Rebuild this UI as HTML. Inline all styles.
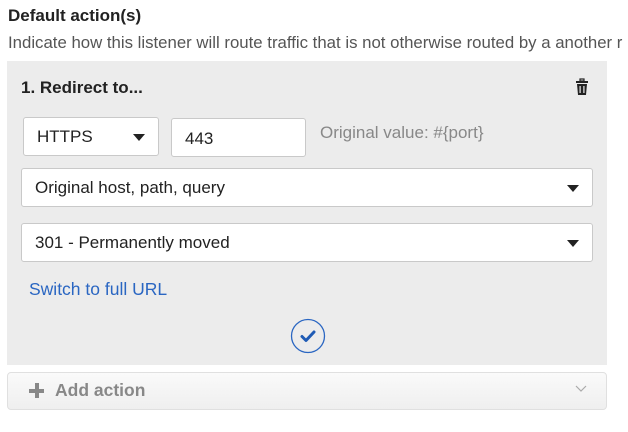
<!DOCTYPE html>
<html><head><style>
body{margin:0;width:628px;height:432px;background:#fff;font-family:"Liberation Sans",Arial,sans-serif;position:relative;overflow:hidden;color:#222}
.a{position:absolute;white-space:nowrap}
.box{position:absolute;background:#fff;border:1px solid #c9c9c9;border-radius:3px;box-sizing:border-box;font-size:17px;color:#222;padding-left:13px;display:flex;align-items:center}
.car{position:absolute;right:13px;top:50%;margin-top:-3px;width:0;height:0;border-left:6px solid transparent;border-right:6px solid transparent;border-top:7px solid #222}
</style></head><body>
<div class="a" style="left:8px;top:6px;font-weight:bold;font-size:17px;color:#222">Default action(s)</div>
<div class="a" style="left:8px;top:33px;font-size:16.8px;color:#555">Indicate how this listener will route traffic that is not otherwise routed by a another r</div>
<div class="a" style="left:7px;top:61px;width:600px;height:304px;background:#ececec"></div>
<div class="a" style="left:21px;top:78px;font-weight:bold;font-size:17px">1. Redirect to...</div>
<svg class="a" style="left:573px;top:78px" width="18" height="18" viewBox="0 0 18 18"><rect x="3" y="3" width="12" height="2" fill="#222"/><rect x="7" y="1" width="4" height="2" fill="none" stroke="#222" stroke-width="1.2"/><path d="M4 6h10l-1 11H5z" fill="#222"/><rect x="6.5" y="8" width="1.2" height="7" fill="#ececec"/><rect x="10.3" y="8" width="1.2" height="7" fill="#ececec"/></svg>
<div class="box" style="left:23px;top:117px;width:136px;height:39px">HTTPS<div class="car"></div></div>
<div class="box" style="left:171px;top:118px;width:135px;height:39px;padding-top:3px">443</div>
<div class="a" style="left:320px;top:123px;font-size:17px;color:#888">Original value: #{port}</div>
<div class="box" style="left:21px;top:168px;width:572px;height:39px">Original host, path, query<div class="car"></div></div>
<div class="box" style="left:21px;top:223px;width:572px;height:39px">301 - Permanently moved<div class="car"></div></div>
<div class="a" style="left:29px;top:279px;font-size:17.5px;color:#2a66c2">Switch to full URL</div>
<svg class="a" style="left:290px;top:318px" width="36" height="36" viewBox="0 0 36 36"><circle cx="18" cy="18" r="16.5" fill="none" stroke="#2a66c2" stroke-width="1.3"/><path d="M12 18.5l4 4 8-8.5" fill="none" stroke="#1f5bb5" stroke-width="3" stroke-linecap="round" stroke-linejoin="round"/></svg>
<div class="a" style="left:7px;top:372px;width:600px;height:38px;box-sizing:border-box;border:1px solid #e0e0e0;border-radius:4px;background:linear-gradient(#fafafa,#efefef)"></div>
<div class="a" style="left:29px;top:389px;width:15px;height:4px;background:#888"></div>
<div class="a" style="left:34.5px;top:383px;width:4px;height:15px;background:#888"></div>
<div class="a" style="left:55px;top:380px;font-weight:bold;font-size:17.5px;color:#888">Add action</div>
<svg class="a" style="left:575px;top:385px" width="12" height="8"><path d="M1 1l5 5 5-5" fill="none" stroke="#aaa" stroke-width="1.2"/></svg>
</body></html>
